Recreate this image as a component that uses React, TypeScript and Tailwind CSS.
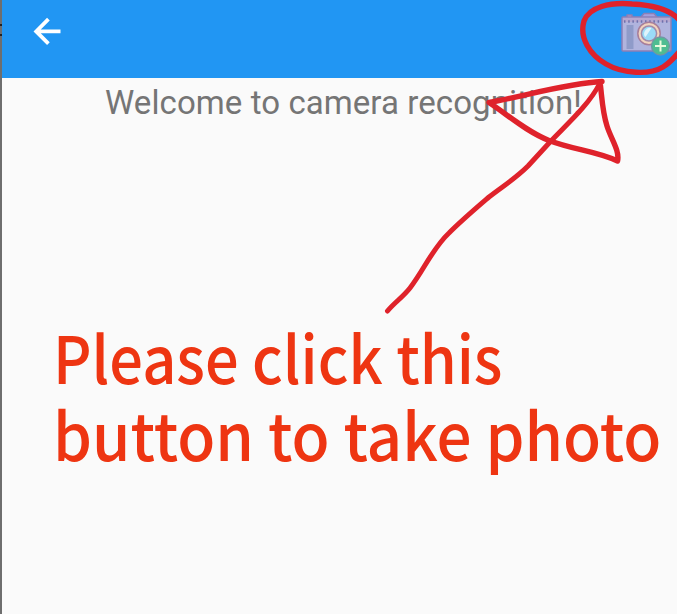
function BackArrow() {
  return (
    <svg width="30" height="28" viewBox="0 0 30 28" fill="none" stroke="#fff" strokeWidth="3.8" aria-hidden="true">
      <path d="M29.5 14.4H5M17.4 2.2 5.2 14.4 17.4 26.6" />
    </svg>
  );
}

function CameraAdd() {
  return (
    <svg width="52" height="44" viewBox="0 0 52 44" fill="none" stroke="#8d7fb5" strokeWidth="1.5" strokeLinejoin="round" aria-hidden="true">
      <path d="M6 5V3h5v2" fill="#c9a9bd" />
      <path d="M20 5l3-3.5h10l3 3.5" fill="#a5a0dc" />
      <rect x="1" y="5" width="49" height="34" rx="1" fill="#b0b4de" />
      <path d="M2 6h47v4H2z" fill="#b6a8d0" stroke="none" />
      <path d="M3 9.5h45" stroke="#6f72ad" strokeWidth="2.4" strokeDasharray="1.5 2.7" />
      <rect x="5.5" y="13" width="7" height="24" fill="#8f9bc9" stroke="none" />
      <circle cx="28" cy="21.5" r="11.2" fill="#f2d3bd" stroke="#a77e9a" />
      <circle cx="28" cy="21.5" r="7.6" fill="#9bdcf8" stroke="#a28ba9" />
      <path d="M23.5 24a6 6 0 0 1 7-8l-6 9z" fill="#dff4fc" stroke="none" />
      <circle cx="39.5" cy="34" r="9" fill="#4fbd91" stroke="#7196a4" strokeWidth="1.3" />
      <path d="M39.5 28.5v11M34 34h11" stroke="#e9fbdc" strokeWidth="2" />
    </svg>
  );
}

function Annotation() {
  return (
    <svg className="pointer-events-none absolute inset-0" width="677" height="614" viewBox="0 0 677 614" fill="none" stroke="#df222b" strokeWidth="5.4" strokeLinecap="round" strokeLinejoin="round" aria-hidden="true">
      <path d="M680 21C671 9 652 5 632 4C610 2 589 7 584 21C579 38 590 55 606 64C623 74 650 75 663 67C670 63 675 57 680 51" />
      <path d="M387.5 311C394 303 403 297 410 288C424 270 432 249 449 233C462 220 475 209 489 197C503 186 515 179 528 166L550 142C566 125 589 105 600 83" strokeWidth="5" />
      <path d="M602 81.5C568 83 525 96 489 102.5C508 115 527 132 549 140.5C574 150 596 151 617.5 161C620 151 611 139 607 126C602 110 602 96 600 82" />
    </svg>
  );
}

export default function App() {
  return (
    <div className="relative flex h-[614px] w-[677px] overflow-hidden bg-[#fafafa]">
      <div className="flex w-[2px] shrink-0 flex-col bg-[#6e6e6e]">
        <div className="mt-6 h-[2px] bg-[#222]" />
        <div className="mt-2 h-[2px] bg-[#222]" />
      </div>
      <div className="flex min-w-0 flex-1 flex-col">
        <header className="flex h-[78px] shrink-0 items-start justify-between bg-[#2196f3] pr-1 pl-[29px]">
          <button aria-label="Back" className="mt-[17px]"><BackArrow /></button>
          <button aria-label="Take photo" className="mt-3"><CameraAdd /></button>
        </header>
        <main className="flex flex-col items-start">
          <p className="mt-[5px] ml-[103px] whitespace-nowrap font-['Roboto',sans-serif] text-[33px] leading-[40px] tracking-[0.08px] text-[#757575]">
            Welcome to camera recognition!
          </p>
          <h1 className="mt-[195px] ml-[51px] flex w-[610px] flex-col whitespace-nowrap font-['Noto_Sans_CJK_SC',sans-serif] text-[65px] leading-[77px] font-medium text-[#ee3512]">
            <span className="origin-left scale-x-[0.916]">Please click this</span>
            <span className="origin-left scale-x-[0.954]">button to take photo</span>
          </h1>
        </main>
      </div>
      <Annotation />
    </div>
  );
}
